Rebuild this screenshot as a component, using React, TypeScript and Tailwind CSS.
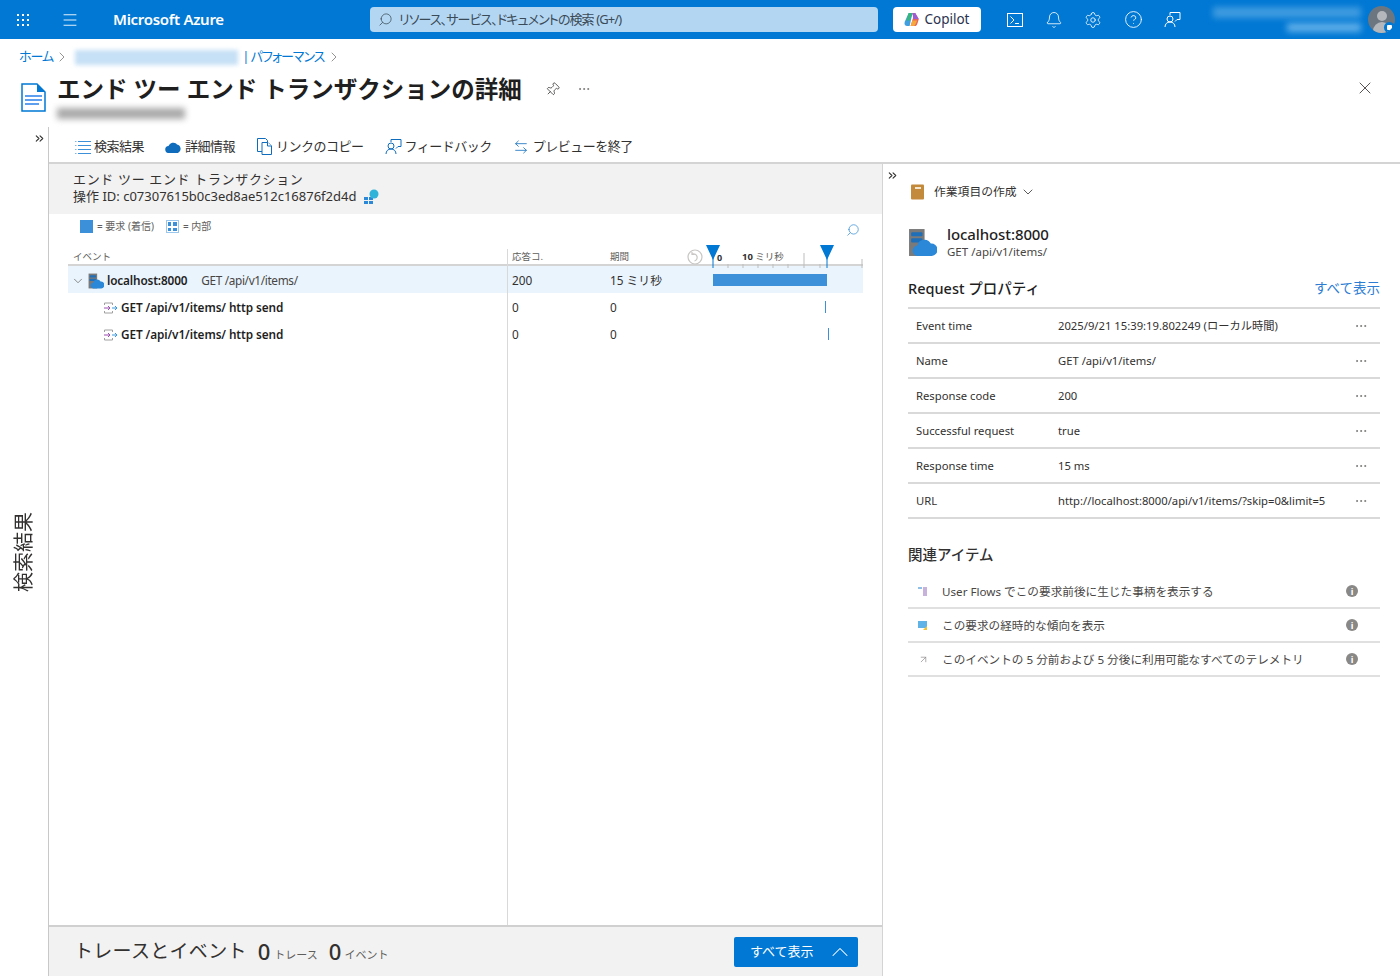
import React from 'react';
import {
  ArrowLeftRight,
  ArrowUpRight,
  Bell,
  ChevronDown,
  ChevronRight,
  ChevronsRight,
  ChevronUp,
  CircleHelp,
  Ellipsis,
  Menu,
  Pin,
  Search,
  Settings,
  X,
} from 'lucide-react';

const FONT = "font-['Noto_Sans','Noto_Sans_CJK_JP',sans-serif]";

const PROPERTIES = [
  { name: 'Event time', value: '2025/9/21 15:39:19.802249 (ローカル時間)' },
  { name: 'Name', value: 'GET /api/v1/items/' },
  { name: 'Response code', value: '200' },
  { name: 'Successful request', value: 'true' },
  { name: 'Response time', value: '15 ms' },
  { name: 'URL', value: 'http://localhost:8000/api/v1/items/?skip=0&limit=5' },
];

const GridDots = () => (
  <svg width="14" height="14" viewBox="0 0 14 14" fill="white">
    {[1, 6, 11].map((y) =>
      [1, 6, 11].map((x) => <rect key={`${x}-${y}`} x={x} y={y} width="2" height="2" />)
    )}
  </svg>
);

const CopilotLogo = () => (
  <svg width="15" height="15" viewBox="0 0 16 16">
    <path d="M5 1h4L6 15H3.500C1 15 0 13 .8 10.500z" fill="#3f9fe0" />
    <path d="M5 1h4.500L6 9H2.500z" fill="#39b67c" />
    <path d="M7 15h4c2 0 3-1 4-5l.8-2.500L12 1H9l1 4-3 10z" fill="#e8655a" />
    <path d="M9 1h3l3.500 6.500H10z" fill="#9a5fd6" />
    <path d="M7 15l2-6h5l-1.500 3.500C12 14 11 15 9.500 15z" fill="#f5a83c" />
  </svg>
);

const TerminalIcon = () => (
  <svg width="16" height="16" viewBox="0 0 16 16" fill="none" stroke="white" strokeWidth="1">
    <rect x="0.500" y="1.500" width="15" height="13" />
    <path d="M3.500 4.500L7 8l-3.500 3.500M8 11.500h4" />
  </svg>
);

const FeedbackIcon = ({ color = 'white' }: { color?: string }) => (
  <svg width="17" height="17" viewBox="0 0 17 17" fill="none" stroke={color} strokeWidth="1">
    <path d="M6 4V1.500h10v7h-3l-2 2" />
    <circle cx="6" cy="8" r="3" />
    <path d="M1 16c0-3 2-5 5-5s5 2 5 5" />
  </svg>
);

const FileIcon = () => (
  <svg width="25" height="29" viewBox="0 0 25 29">
    <path d="M1 1h15l8 8v19H1z" fill="white" stroke="#0078d4" strokeWidth="1.500" />
    <path d="M16 1v8h8z" fill="#0078d4" />
    <path d="M4 13h17M4 17h17M4 21h14" stroke="#5ea0ef" strokeWidth="1.800" />
  </svg>
);

const ListLinesIcon = () => (
  <svg width="16" height="14" viewBox="0 0 16 14" stroke="#3b90d9" strokeWidth="1" fill="none">
    <path d="M3 1.500h13M3 5.500h13M3 9.500h13M3 13.500h13" />
    <path d="M0 1.500h1.500M0 5.500h1.500M0 9.500h1.500M0 13.500h1.500" stroke="#7ab6ea" />
  </svg>
);

const CopyDocIcon = () => (
  <svg width="15" height="17" viewBox="0 0 15 17" stroke="currentColor" strokeWidth="1" fill="white">
    <path d="M0.500 0.500h8l2 2v11h-10z" />
    <path d="M5 4.500h6l3.500 3.500v8.500H5z" />
    <path d="M10.500 4.500v3.500h4" />
  </svg>
);

const ResetZoomIcon = () => (
  <svg width="16" height="16" viewBox="0 0 16 16" fill="none" stroke="#c8c6c4" strokeWidth="1.200">
    <circle cx="8" cy="8" r="7" />
    <path d="M5.500 5a3.500 3.500 0 1 1 2 7M5 3v2.500h2.500" />
  </svg>
);

const AppInsightsIcon = ({ size }: { size: number }) => (
  <svg width={size} height={size} viewBox="0 0 28 28">
    <rect x="1" y="1" width="15" height="26" fill="#7a7a7a" />
    <rect x="3" y="4" width="11" height="4" rx="1" fill="#1f6fb8" />
    <rect x="3" y="10" width="11" height="4" rx="1" fill="#1f6fb8" />
    <path
      d="M10 27a5 5 0 0 1-1-10 7 7 0 0 1 13-2 6 6 0 0 1 1 12z"
      fill="#2b88d8"
    />
  </svg>
);

const DependencyIcon = () => (
  <svg width="15" height="12" viewBox="0 0 15 12" fill="none" strokeWidth="1">
    <path d="M1.500 3V1h8v2M1.500 9v2h8V9" stroke="#a0a0a0" />
    <path d="M1 6h6M5 4l2 2-2 2" stroke="#9b4fb0" />
    <path d="M9 6h5M12 4l2 2-2 2" stroke="#3999e0" />
  </svg>
);

const RelatedFlowIcon = () => (
  <svg width="9" height="9" viewBox="0 0 9 9">
    <rect x="0" y="0" width="4" height="2" fill="#8fc1e8" />
    <rect x="5" y="0" width="4" height="9" fill="#c7b2dc" />
  </svg>
);

const RelatedTrendIcon = () => (
  <svg width="9" height="9" viewBox="0 0 9 9">
    <rect x="0" y="0" width="9" height="7" fill="#5fb3e6" />
    <path d="M5 9l4-4v4z" fill="#f2c230" />
  </svg>
);

const ToolbarItem = ({
  icon,
  label,
}: {
  icon: React.ReactNode;
  label: string;
}) => (
  <div className="flex items-center gap-[3px] text-[13px] text-[#323130] whitespace-nowrap">
    <span className="flex w-[17px] justify-center text-[#0f6cbd]">{icon}</span>
    {label}
  </div>
);

const TimelineHeader = () => (
  <div className="relative h-full">
    <svg width="150" height="26" viewBox="0 0 150 26" className="absolute left-0 top-0 overflow-visible">
      <path d="M-6 0h14L1 15z" fill="#0078d4" />
      <path d="M1 10v13" stroke="#0078d4" />
      <path d="M108 0h14l-7 15z" fill="#0078d4" />
      <path d="M115 10v13" stroke="#0078d4" />
      <g stroke="#bdbdbd">
        <path d="M16 19v4M31 19v4M46 19v4M61 19v4M76 19v4M92 8v15M108 19v4M150 14v9" />
      </g>
    </svg>
    <span className="absolute left-[5px] top-[5px] text-[9px] font-bold text-[#323130]">0</span>
    <span className="absolute left-[30px] top-[4px] text-[9.500px] text-[#605e5c] whitespace-nowrap">
      <b className="text-[#323130]">10</b> ミリ秒
    </span>
  </div>
);

const Row = ({
  active,
  event,
  code,
  duration,
  bar,
}: {
  active?: boolean;
  event: React.ReactNode;
  code: string;
  duration: string;
  bar: React.ReactNode;
}) => (
  <div
    className={`grid h-[27px] grid-cols-[439px_98px_107px_151px] items-center text-[11.800px] text-[#323130] ${
      active ? 'bg-[#eaf4fd]' : ''
    }`}
  >
    <div className="flex items-center pt-[2px]">{event}</div>
    <div className="pl-[5px] pt-[2px]">{code}</div>
    <div className="pl-[5px] pt-[2px]">{duration}</div>
    <div className="flex h-full items-center">{bar}</div>
  </div>
);

export default function App() {
  return (
    <div className={`flex h-[976px] w-[1400px] flex-col overflow-hidden bg-white ${FONT}`}>
      {/* top bar */}
      <header className="flex h-[39px] shrink-0 items-center bg-[#0078d4] text-white">
        <div className="ml-4 w-[45px]">
          <GridDots />
        </div>
        <Menu className="h-[18px] w-[18px]" strokeWidth={1.200} />
        <span className="ml-[34px] w-[257px] text-[15px] font-semibold tracking-[-0.3px]">
          Microsoft Azure
        </span>
        <div className="flex h-[25px] w-[508px] items-center gap-[6px] rounded-sm bg-[#b3d7f2] pl-[8px] text-[13px] tracking-[-0.9px] text-[#3b4a57] [font-feature-settings:'palt']">
          <Search className="h-[15px] w-[15px] -scale-x-100" strokeWidth={1.200} />
          リソース、サービス、ドキュメントの検索 (G+/)
        </div>
        <div className="ml-[15px] flex h-[25px] w-[88px] items-center justify-center gap-[5px] rounded-sm bg-white text-[13.500px] text-[#2b3350]">
          <CopilotLogo />
          Copilot
        </div>
        <div className="ml-[26px] flex w-[174px] items-center justify-between">
          <TerminalIcon />
          <Bell className="h-[18px] w-[18px]" strokeWidth={1.100} />
          <Settings className="h-[18px] w-[18px]" strokeWidth={1.100} />
          <CircleHelp className="h-[19px] w-[19px]" strokeWidth={1.100} />
          <FeedbackIcon />
        </div>
        <div className="ml-[32px] flex w-[148px] flex-col items-end gap-[5px]">
          <div className="h-[11px] w-[148px] bg-[#3f9be0] blur-[3px]" />
          <div className="h-[9px] w-[74px] bg-[#5eaee8] blur-[3px]" />
        </div>
        <div className="relative ml-[7px] h-[27px] w-[27px] overflow-hidden rounded-full bg-[#6b7680]">
          <div className="mx-auto mt-[5px] h-[10px] w-[10px] rounded-full bg-[#b4b8bc]" />
          <div className="mx-auto mt-px h-[12px] w-[18px] rounded-t-full bg-[#b4b8bc]" />
          <div className="absolute bottom-0 right-0 flex h-[11px] w-[11px] items-center justify-center rounded-full bg-[#0078d4]">
            <div className="h-[5px] w-[5px] rounded-[1px] bg-white" />
          </div>
        </div>
      </header>

      {/* breadcrumb */}
      <nav className="mt-[8px] flex h-5 shrink-0 items-center pl-[19px] text-[13px] tracking-[-1px] text-[#0078d4] [font-feature-settings:'palt']">
        ホーム
        <ChevronRight className="mx-[1px] h-[16px] w-[16px] text-[#605e5c]" strokeWidth={1} />
        <div className="ml-[4px] h-[15px] w-[163px] bg-[#c6e0f5] blur-[2px]" />
        <span className="ml-[4px]">| パフォーマンス</span>
        <ChevronRight className="ml-[2px] h-[16px] w-[16px] text-[#605e5c]" strokeWidth={1} />
      </nav>

      {/* title */}
      <div className="flex h-[60px] shrink-0 pt-[8px]">
        <div className="ml-[21px] mt-[8px] w-[36px]">
          <FileIcon />
        </div>
        <div>
          <div className="flex items-center">
            <h1 className="text-[23.500px] leading-[28px] font-bold text-[#1f1f1f]">
              エンド ツー エンド トランザクションの詳細
            </h1>
            <Pin className="ml-[23px] h-[15px] w-[15px] rotate-45 text-[#323130]" strokeWidth={1.200} />
            <Ellipsis className="ml-[17px] h-[14px] w-[14px] text-[#605e5c]" strokeWidth={1.200} />
          </div>
          <div className="mt-[5px] h-[11px] w-[128px] bg-[#a9a9a9] blur-[3px]" />
        </div>
        <X className="ml-auto mr-[25px] mt-[3px] h-[20px] w-[20px] text-[#323130]" strokeWidth={1} />
      </div>

      <div className="flex min-h-0 flex-1">
        {/* collapsed search blade */}
        <aside className="relative flex w-[49px] shrink-0 flex-col items-center border-r border-[#c8c8c8]">
          <ChevronsRight className="ml-[30px] mt-[5px] h-[13px] w-[13px] text-[#323130]" strokeWidth={2} />
          <span className="mt-[367px] rotate-180 text-[20px] leading-[20px] text-[#323130] [text-orientation:sideways] [writing-mode:vertical-rl]">
            検索結果
          </span>
        </aside>

        <div className="flex min-w-0 flex-1 flex-col">
          {/* toolbar */}
          <div className="flex h-[37px] shrink-0 items-center gap-[21px] border-b-2 border-[#d4d4d4] pl-[25px] pt-[4px] tracking-[-0.5px]">
            <ToolbarItem icon={<ListLinesIcon />} label="検索結果" />
            <ToolbarItem
              icon={
                <svg width="17" height="12" viewBox="0 0 17 12" fill="#0f6cbd">
                  <path d="M4 12a3.500 3.500 0 0 1-.5-7A5 5 0 0 1 12 3.500 4.500 4.500 0 0 1 13 12z" />
                </svg>
              }
              label="詳細情報"
            />
            <ToolbarItem icon={<CopyDocIcon />} label="リンクのコピー" />
            <ToolbarItem icon={<FeedbackIcon color="#0f6cbd" />} label="フィードバック" />
            <ToolbarItem icon={<ArrowLeftRight className="h-[16px] w-[16px]" strokeWidth={1.200} />} label="プレビューを終了" />
          </div>

          <div className="flex min-h-0 flex-1">
            {/* transaction panel */}
            <main className="flex w-[834px] shrink-0 flex-col border-r border-[#d4d4d4]">
              <div className="h-[50px] shrink-0 bg-[#f2f2f2] pl-[24px] pt-[7px] text-[13px] leading-[17px] text-[#323130]">
                <div className="tracking-[0.65px]">エンド ツー エンド トランザクション</div>
                <div className="flex items-center gap-[7px]">
                  操作 ID: c07307615b0c3ed8ae512c16876f2d4d
                  <svg width="16" height="16" viewBox="0 0 16 16">
                    <rect x="1" y="8" width="4" height="3" fill="#2b88d8" />
                    <rect x="6" y="8" width="4" height="3" fill="#2b88d8" />
                    <rect x="1" y="12" width="4" height="3" fill="#2b88d8" />
                    <rect x="6" y="12" width="4" height="3" fill="#2b88d8" />
                    <circle cx="11" cy="5" r="4.500" fill="#30b3d8" />
                  </svg>
                </div>
              </div>

              {/* legend */}
              <div className="flex h-[31px] shrink-0 items-start pl-[31px] pr-[23px] pt-[6px] text-[10px] leading-[13px] text-[#605e5c]">
                <span className="h-[13px] w-[13px] bg-[#3b90d9]" />
                <span className="ml-[4px]">= 要求 (着信)</span>
                <span className="ml-[12px] grid h-[13px] w-[13px] grid-cols-2 gap-[2px] border border-[#9cc7ec] p-px">
                  <i className="bg-[#3b90d9]" />
                  <i className="bg-[#3b90d9]" />
                  <i className="bg-[#3b90d9]" />
                  <i className="bg-[#3b90d9]" />
                </span>
                <span className="ml-[4px]">= 内部</span>
                <Search className="ml-auto mt-[3px] mr-[-1px] h-[14px] w-[14px] -scale-x-100 text-[#3b90d9]" strokeWidth={1.300} />
              </div>

              {/* table */}
              <div className="relative ml-[19px] mr-[19px] flex min-h-0 flex-1 flex-col">
                <div className="absolute bottom-0 left-[439px] top-[4px] w-px bg-[#d9d9d9]" />
                <div className="grid h-[21px] shrink-0 grid-cols-[439px_98px_107px_151px] items-end border-b-2 border-[#d4d4d4] pb-[2px] text-[9.500px] leading-[15px] text-[#605e5c]">
                  <span className="pl-[5px] pb-[3px]">イベント</span>
                  <span className="pl-[5px] pb-[3px]">応答コ.</span>
                  <div className="relative pl-[5px] pb-[3px]">
                    期間
                    <span className="absolute bottom-[2px] right-[9px]">
                      <ResetZoomIcon />
                    </span>
                  </div>
                  <div className="-mb-[2px] h-[24px]">
                    <TimelineHeader />
                  </div>
                </div>
                <Row
                  active
                  event={
                    <>
                      <ChevronDown className="ml-[3px] h-[14px] w-[14px] text-[#605e5c]" strokeWidth={1.200} />
                      <span className="ml-[3px]">
                        <AppInsightsIcon size={16} />
                      </span>
                      <b className="ml-[3px] font-semibold tracking-[-0.15px] text-[#1f1f1f]">localhost:8000</b>
                      <span className="ml-[14px] tracking-[-0.35px] text-[#484644]">GET /api/v1/items/</span>
                    </>
                  }
                  code="200"
                  duration="15 ミリ秒"
                  bar={<div className="ml-px h-[12px] w-[114px] bg-[#3b90d9]" />}
                />
                <Row
                  event={
                    <>
                      <span className="ml-[35px]">
                        <DependencyIcon />
                      </span>
                      <b className="ml-[3px] font-semibold tracking-[-0.1px] text-[#1f1f1f]">GET /api/v1/items/ http send</b>
                    </>
                  }
                  code="0"
                  duration="0"
                  bar={<div className="ml-[113px] h-[12px] w-px bg-[#3b90d9]" />}
                />
                <Row
                  event={
                    <>
                      <span className="ml-[35px]">
                        <DependencyIcon />
                      </span>
                      <b className="ml-[3px] font-semibold tracking-[-0.1px] text-[#1f1f1f]">GET /api/v1/items/ http send</b>
                    </>
                  }
                  code="0"
                  duration="0"
                  bar={<div className="ml-[116px] h-[12px] w-px bg-[#3b90d9]" />}
                />
              </div>

              {/* traces footer */}
              <div className="flex h-[51px] shrink-0 items-center border-t-2 border-[#d0d0d0] bg-[#f2f2f2] pl-[25px] pr-[24px] text-[#323130]">
                <span className="text-[19px] tracking-[0.3px]">トレースとイベント</span>
                <span className="ml-[11px] text-[22px] font-medium">0</span>
                <span className="ml-[4px] mt-[7px] text-[11px] text-[#605e5c]">トレース</span>
                <span className="ml-[11px] text-[22px] font-medium">0</span>
                <span className="ml-[3px] mt-[7px] text-[11px] text-[#605e5c]">イベント</span>
                <button className="ml-auto flex h-[30px] w-[124px] items-center justify-between rounded-[2px] bg-[#0078d4] pl-[16px] pr-[4px] text-[13px] text-white">
                  すべて表示
                  <ChevronUp className="h-[28px] w-[28px]" strokeWidth={0.900} />
                </button>
              </div>
            </main>

            {/* details panel */}
            <section className="min-w-0 flex-1">
              <ChevronsRight className="ml-[3px] mt-[5px] h-[13px] w-[13px] text-[#323130]" strokeWidth={2} />
              <div className="ml-[27px] mt-[1px] flex items-center text-[11.800px] text-[#323130]">
                <svg width="15" height="16" viewBox="0 0 15 16">
                  <rect x="1" y="0.500" width="13" height="15" rx="1" fill="#c48a3c" />
                  <rect x="5" y="3" width="6" height="2" fill="#f5e6cf" />
                </svg>
                <span className="ml-[9px]">作業項目の作成</span>
                <ChevronDown className="ml-[3px] h-[16px] w-[16px]" strokeWidth={1.200} />
              </div>

              <div className="ml-[25px] mt-[24px] flex items-center gap-[10px]">
                <AppInsightsIcon size={29} />
                <div>
                  <div className="text-[15px] font-medium leading-[19px] tracking-[-0.1px] text-[#1f1f1f]">localhost:8000</div>
                  <div className="text-[11.500px] leading-[16px] text-[#484644]">GET /api/v1/items/</div>
                </div>
              </div>

              <div className="ml-[25px] mr-[20px] mt-[18px]">
                <div className="flex items-center justify-between pb-[9px]">
                  <h2 className="text-[14.500px] font-medium leading-[20px] text-[#1f1f1f]">Request プロパティ</h2>
                  <a className="text-[13.500px] text-[#2b7cd3]">すべて表示</a>
                </div>
                <div className="border-t-2 border-[#d9d9d9]">
                  {PROPERTIES.map((p) => (
                    <div
                      key={p.name}
                      className="grid h-[35px] grid-cols-[142px_1fr_26px] items-center border-b-2 border-[#d9d9d9] pl-[8px] pt-px text-[11.250px] text-[#323130]"
                    >
                      <span>{p.name}</span>
                      <span className="whitespace-nowrap">{p.value}</span>
                      <Ellipsis className="h-[14px] w-[14px] text-[#605e5c]" strokeWidth={1.200} />
                    </div>
                  ))}
                </div>

                <h2 className="mt-[25px] text-[14.500px] font-medium leading-[20px] text-[#323130]">関連アイテム</h2>
                <div className="mt-[11px]">
                  {[
                    { icon: <RelatedFlowIcon />, label: 'User Flows でこの要求前後に生じた事柄を表示する' },
                    { icon: <RelatedTrendIcon />, label: 'この要求の経時的な傾向を表示' },
                    {
                      icon: <ArrowUpRight className="h-[11px] w-[11px] text-[#8a8886]" strokeWidth={1.500} />,
                      label: 'このイベントの 5 分前および 5 分後に利用可能なすべてのテレメトリ',
                    },
                  ].map((item) => (
                    <div
                      key={item.label}
                      className="flex h-[34px] items-center border-b-2 border-[#e0e0e0] pl-[10px] pt-px text-[11.650px] text-[#484644]"
                    >
                      <span className="flex w-[24px]">{item.icon}</span>
                      {item.label}
                      <span className="ml-auto mr-[22px] flex h-[12px] w-[12px] items-center justify-center rounded-full bg-[#8a8886] text-[9px] leading-none font-bold text-white">
                        i
                      </span>
                    </div>
                  ))}
                </div>
              </div>
            </section>
          </div>
        </div>
      </div>
    </div>
  );
}
